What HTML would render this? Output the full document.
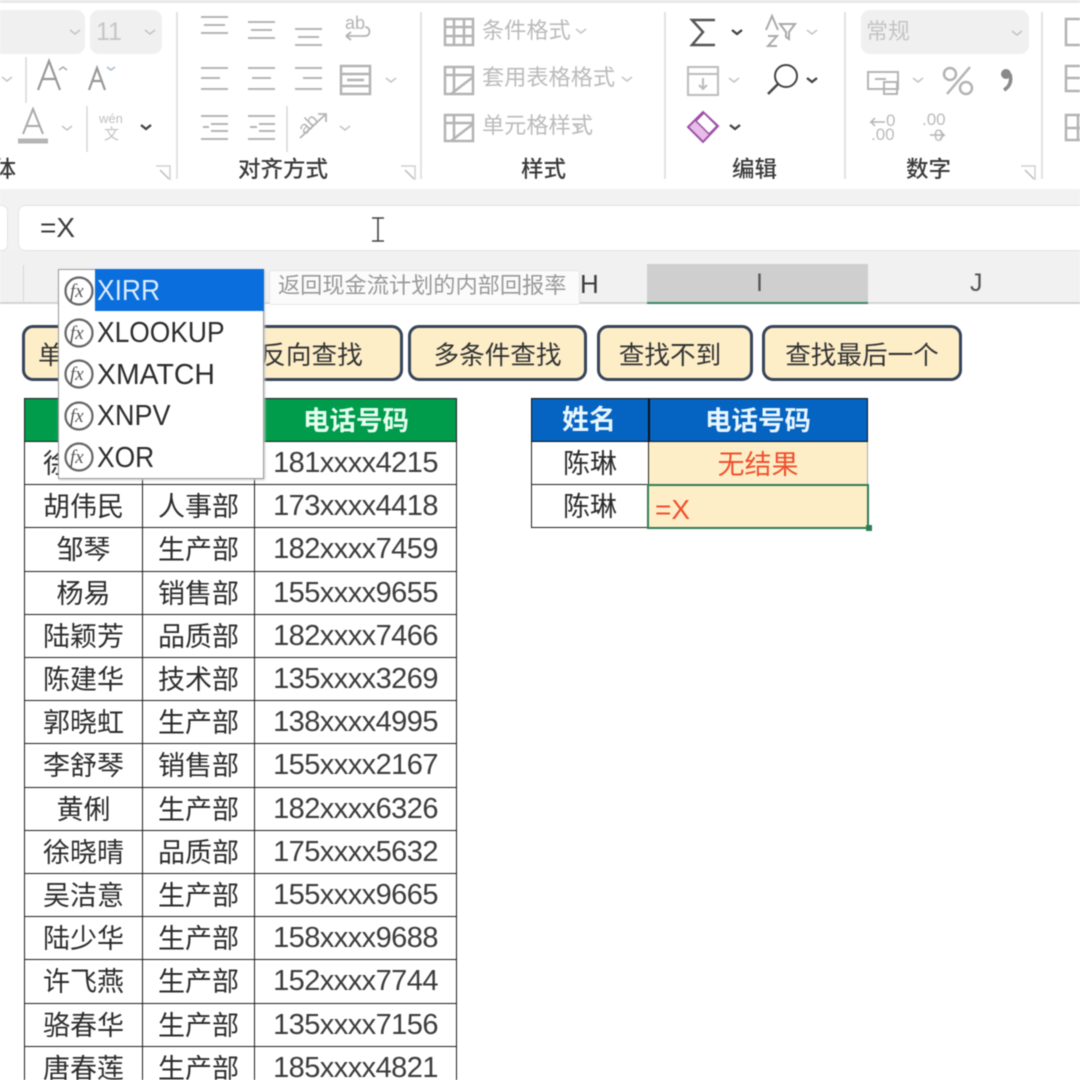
<!DOCTYPE html>
<html><head><meta charset="utf-8"><style>
html,body{margin:0;padding:0;background:#fff}
#p{position:relative;width:1080px;height:1080px;overflow:hidden;background:#fff;font-family:"Liberation Sans","Noto Sans CJK SC",sans-serif;color:#333;filter:blur(.55px)}
#p div{position:absolute;box-sizing:border-box}
.t{white-space:nowrap;line-height:1}
.r{font-size:22.200px;color:#bbb}
.l{font-size:22.500px;color:#3a3a3a;top:159px;font-weight:500}
.c{display:flex;align-items:center;justify-content:center;white-space:nowrap;font-size:27px;color:#2c2c2c;border-right:1.800px solid #1c1c1c;border-bottom:1.800px solid #1c1c1c;height:43.200px;padding-bottom:3px}
.a{left:24px;width:119px;border-left:1.800px solid #1c1c1c}
.b{left:143px;width:112px}
.d{left:255px;width:202px;font-size:29px;color:#3c3c3c;letter-spacing:-.55px;padding-bottom:0;padding-top:1px}
.btn{top:325px;height:56px;background:#fdeec8;border:3px solid #36445a;border-radius:11px;display:flex;align-items:center;justify-content:center;font-size:25.600px;color:#333;white-space:nowrap;padding-top:1px}
.it{left:97px;font-size:29px;color:#2c2c2c;line-height:1;white-space:nowrap;transform:scaleX(.91);transform-origin:left center}
</style></head><body><div id="p">
<div style="left:0;top:0;width:1080px;height:3px;background:#e8e8e8"></div>
<div style="left:0;top:189px;width:1080px;height:16px;background:#f2f2f2"></div>
<div style="left:0;top:205px;width:1080px;height:46px;background:#f2f2f2"></div>
<div style="left:-20px;top:205px;width:28px;height:46px;background:#fff;border-radius:6px;border:1px solid #e4e4e4"></div>
<div style="left:18px;top:205px;width:1080px;height:46px;background:#fff;border-radius:7px;border:1px solid #e4e4e4"></div>
<div class="t" style="left:40px;top:214px;font-size:28px;color:#3c3c3c">=X</div>
<svg style="position:absolute;left:369px;top:216px" width="18" height="27" fill="none" stroke="#444" stroke-width="1.600"><path d="M3 2h12M9 2v23M3 25h12"/></svg>
<div style="left:0;top:251px;width:1080px;height:53px;background:#f1f1f1;border-bottom:2px solid #d4d4d4"></div>
<div style="left:23px;top:265px;width:1px;height:38px;background:#d6d6d6"></div>
<div style="left:647px;top:264px;width:221px;height:40px;background:#cfcfcf;border-bottom:2px solid #3a8a65"></div>
<div class="t" style="left:580px;top:271px;font-size:26px;color:#3c3c3c">H</div>
<div class="t" style="left:756px;top:271px;font-size:25px;color:#555">I</div>
<div class="t" style="left:970px;top:271px;font-size:25px;color:#555">J</div>

<div style="left:0;top:10px;width:85px;height:44px;background:#f0f0f0;border-radius:0 9px 9px 0"></div>
<div style="left:90px;top:10px;width:72px;height:44px;background:#f0f0f0;border-radius:9px"></div>
<div style="left:861px;top:10px;width:168px;height:44px;background:#f0f0f0;border-radius:9px"></div>

<svg style="position:absolute;left:0;top:0" width="1080" height="189" fill="none" stroke="#b4b4b4" stroke-width="2">
<g stroke="#e2e2e2" stroke-width="2"><path d="M177 12v167M421 12v167M665 12v167M845 12v167M1042 12v167"/></g>
<g stroke="#d8d8d8" stroke-width="1.500"><path d="M26 57v46M87 106v46M287 106v46"/></g>
<path d="M201 17h27M204 25h21M201 33h27M248 22h27M251 30h21M248 38h27M295 29h27M298 37h21M295 45h27"/>
<path d="M201 68h27M201 78h19M201 89h27M248 68h27M252 78h19M248 89h27M295 68h27M303 78h19M295 89h27"/>
<path d="M341 66h29v28h-29zM341 74h29M341 86h29M347 80h17" stroke-width="2.500"/>
<path d="M201 116h27M211 124h17M211 131h17M201 139h27M203 127h6M248 116h27M259 124h16M259 131h16M248 139h27M250 127h7"/>
<path d="M300 138l26-24M318 114h8v8" stroke-width="1.800"/>
<path d="M346 36h19c6 0 6-9 0-9M346 36l5-4M346 36l5 4" stroke-width="1.800"/>
<path d="M38 90l11-29 11 29M42 79h14" stroke="#999" stroke-width="2.200"/>
<path d="M89 90l8-22 8 22M92 81h10" stroke="#999" stroke-width="2.200"/>
<path d="M59 70l4-3 4 3" stroke="#aaa" stroke-width="1.500"/><path d="M107 67l4 3 4-3" stroke="#a8bcd6" stroke-width="1.500"/>
<path d="M23 134l10-25 10 25M26 126h14" stroke="#aaa"/>
<path d="M18 141h30" stroke="#b5b5b5" stroke-width="5"/>
<path d="M70 30l5 4 5-4M145 30l5 4 5-4M1012 31l5 4 5-4M2 77l5 4 5-4M62 126l5 4 5-4M386 78l5 4 5-4M340 126l5 4 5-4M576 29l5 4 5-4M622 77l5 4 5-4M574 125l5 4 5-4M807 30l5 4 5-4M729 78l5 4 5-4M913 78l5 4 5-4" stroke="#c4c4c4" stroke-width="1.500"/>
<path d="M141 125l5 4 5-4M732 30l5 4 5-4M807 78l5 4 5-4M730 125l5 4 5-4" stroke="#444" stroke-width="2.400"/>
<path d="M445 19h28v26h-28zM445 27h28M445 36h28M454 19v26M464 19v26" stroke-width="2.500"/>
<path d="M445 67h28v27h-28zM445 75h28M454 67v27M451 94l22-17" stroke-width="2.500"/>
<path d="M445 115h28v26h-28zM445 123h28M454 115v26M451 141l22-17" stroke-width="2.500"/>
<path d="M715 20h-23l11 12-11 13h23" stroke="#555" stroke-width="2.500"/>
<path d="M688 67h30v28h-30zM688 74h30M703 78v11M699 85l4 4 4-4" stroke="#bbb" stroke-width="2"/>
<circle cx="786" cy="76" r="11" stroke="#444" stroke-width="2"/><path d="M778 84l-10 10" stroke="#444" stroke-width="2.500"/>
<path d="M766 30l6-14 6 14M768 36h9l-9 10h9M780 24h15l-6 8v7l-3-2v-5z" stroke="#aaa"/>
<path d="M703 112l15 14-15 16-15-15z" fill="#e6bde6" stroke="#a050a8" stroke-width="2"/><path d="M704 113l13 13-8 8-13-13z" fill="#fff" stroke="#a050a8" stroke-width="1.500"/>
<path d="M868 72h30v17h-30zM875 79h11M884 82h13v12h-13z" stroke-width="2"/>
<circle cx="950" cy="74" r="6" stroke-width="2.500"/><circle cx="966" cy="88" r="6" stroke-width="2.500"/><path d="M970 67l-23 27" stroke-width="2.500"/>
<circle cx="1006" cy="74" r="5" fill="#8a8a8a" stroke="none"/><path d="M1010 74c2 8-1 13-6 16" stroke="#8a8a8a" stroke-width="3.500"/>
<path d="M885 122h-14l4-4M871 122l4 4M930 135h14l-4-4M944 135l-4 4" stroke-width="1.500"/>
<path d="M1066 19h26v26h-26zM1066 66h26v25h-26zM1066 115h26v25h-26zM1066 78h26M1066 128h26M1078 115v25" stroke-width="2.500"/>
<path d="M156 166h14v14M401 166h14v14M1021 166h14v14" stroke="#d2d2d2" stroke-width="1.500"/>
<path d="M160 170l9 9M405 170l9 9M1025 170l9 9" stroke="#bbb" stroke-width="1.500"/>
</svg>
<div class="t" style="left:96px;top:20px;font-size:25px;color:#c6c6c6">11</div>
<div class="t" style="left:866px;top:21px;font-size:22px;color:#c4c4c4">常规</div>
<div class="t" style="left:345px;top:14px;font-size:18px;color:#b4b4b4">ab</div>
<div class="t" style="left:99px;top:112px;font-size:13px;color:#c0c0c0">wén</div>
<div class="t" style="left:104px;top:127px;font-size:15px;color:#c4c4c4">文</div>
<div class="t" style="left:298px;top:115px;font-size:18px;color:#b4b4b4;transform:rotate(-45deg)">ab</div>
<div class="t" style="left:886px;top:112px;font-size:17px;color:#bbb">0</div>
<div class="t" style="left:871px;top:126px;font-size:17px;color:#bbb">.00</div>
<div class="t" style="left:922px;top:111px;font-size:17px;color:#bbb">.00</div>
<div class="t" style="left:934px;top:127px;font-size:17px;color:#bbb">0</div>
<div class="t r" style="left:482px;top:20px">条件格式</div>
<div class="t r" style="left:482px;top:67px">套用表格格式</div>
<div class="t r" style="left:482px;top:115px">单元格样式</div>
<div class="t l" style="left:-29px">字体</div>
<div class="t l" style="left:238px">对齐方式</div>
<div class="t l" style="left:521px">样式</div>
<div class="t l" style="left:732px">编辑</div>
<div class="t l" style="left:906px">数字</div>

<div class="btn" style="left:22px;width:160px">单条件查找</div>
<div class="btn" style="left:220px;width:183px">反向查找</div>
<div class="btn" style="left:408px;width:179px">多条件查找</div>
<div class="btn" style="left:597px;width:156px;padding-right:10px">查找不到</div>
<div class="btn" style="left:762px;width:200px">查找最后一个</div>

<div style="left:24px;top:398px;width:433px;height:44px;background:#009c4c;border:1.800px solid #1c1c1c"></div>
<div class="t" style="left:303px;top:408px;font-size:26.500px;color:#e6fff0;font-weight:700">电话号码</div>
<div class="c a" style="top:442px">徐文雅</div><div class="c b" style="top:442px">人事部</div><div class="c d" style="top:442px">181xxxx4215</div>
<div class="c a" style="top:485.200px">胡伟民</div><div class="c b" style="top:485.200px">人事部</div><div class="c d" style="top:485.200px">173xxxx4418</div>
<div class="c a" style="top:528.400px">邹琴</div><div class="c b" style="top:528.400px">生产部</div><div class="c d" style="top:528.400px">182xxxx7459</div>
<div class="c a" style="top:571.600px">杨易</div><div class="c b" style="top:571.600px">销售部</div><div class="c d" style="top:571.600px">155xxxx9655</div>
<div class="c a" style="top:614.800px">陆颖芳</div><div class="c b" style="top:614.800px">品质部</div><div class="c d" style="top:614.800px">182xxxx7466</div>
<div class="c a" style="top:658px">陈建华</div><div class="c b" style="top:658px">技术部</div><div class="c d" style="top:658px">135xxxx3269</div>
<div class="c a" style="top:701.200px">郭晓虹</div><div class="c b" style="top:701.200px">生产部</div><div class="c d" style="top:701.200px">138xxxx4995</div>
<div class="c a" style="top:744.400px">李舒琴</div><div class="c b" style="top:744.400px">销售部</div><div class="c d" style="top:744.400px">155xxxx2167</div>
<div class="c a" style="top:787.600px">黄俐</div><div class="c b" style="top:787.600px">生产部</div><div class="c d" style="top:787.600px">182xxxx6326</div>
<div class="c a" style="top:830.800px">徐晓晴</div><div class="c b" style="top:830.800px">品质部</div><div class="c d" style="top:830.800px">175xxxx5632</div>
<div class="c a" style="top:874px">吴洁意</div><div class="c b" style="top:874px">生产部</div><div class="c d" style="top:874px">155xxxx9665</div>
<div class="c a" style="top:917.200px">陆少华</div><div class="c b" style="top:917.200px">生产部</div><div class="c d" style="top:917.200px">158xxxx9688</div>
<div class="c a" style="top:960.400px">许飞燕</div><div class="c b" style="top:960.400px">生产部</div><div class="c d" style="top:960.400px">152xxxx7744</div>
<div class="c a" style="top:1003.600px">骆春华</div><div class="c b" style="top:1003.600px">生产部</div><div class="c d" style="top:1003.600px">135xxxx7156</div>
<div class="c a" style="top:1046.800px">唐春莲</div><div class="c b" style="top:1046.800px">生产部</div><div class="c d" style="top:1046.800px">185xxxx4821</div>

<div style="left:531px;top:398px;width:337px;height:44px;background:#0563c1;border:1.800px solid #111"></div>
<div style="left:648px;top:398px;width:1.800px;height:131px;background:#111"></div>
<div class="t" style="left:562px;top:407px;font-size:27px;color:#e8f6ff;font-weight:700">姓名</div>
<div class="t" style="left:705px;top:408px;font-size:26.500px;color:#e8f6ff;font-weight:700">电话号码</div>
<div class="c" style="left:531px;top:442px;width:118px;border-left:1.800px solid #1c1c1c">陈琳</div>
<div class="c" style="left:531px;top:485.200px;width:118px;border-left:1.800px solid #1c1c1c">陈琳</div>
<div class="c" style="left:649px;top:442px;width:219px;background:#fdeec8;color:#f0502d;border-bottom:none;border-right:1px solid #aaa">无结果</div>
<div style="left:647px;top:484px;width:222px;height:45px;background:#fdeec8;border:2.500px solid #2f7d55"></div>
<div style="left:866px;top:525px;width:6px;height:6px;background:#2f7d55"></div>
<div class="t" style="left:655px;top:496px;font-size:28px;color:#f0502d">=X</div>

<div style="left:58px;top:269px;width:206px;height:210px;background:#fff;border:1px solid #999;box-shadow:1px 1px 2px #ccc"></div>
<div style="left:95px;top:269px;width:169px;height:42px;background:#0a6fdc"></div>
<div class="it" style="top:277px;color:#dcecff">XIRR</div>
<div class="it" style="top:319px">XLOOKUP</div>
<div class="it" style="top:361px;transform:scaleX(.98)">XMATCH</div>
<div class="it" style="top:402px;transform:scaleX(.93)">XNPV</div>
<div class="it" style="top:444px">XOR</div>
<svg style="position:absolute;left:62px;top:274px" width="34" height="200" fill="none" stroke="#666" stroke-width="2.200" font-family="Liberation Serif" font-style="italic" font-size="19">
<g><circle cx="17" cy="17" r="13.500"/><circle cx="17" cy="59" r="13.500"/><circle cx="17" cy="100" r="13.500"/><circle cx="17" cy="142" r="13.500"/><circle cx="17" cy="183" r="13.500"/></g>
<g fill="#555" stroke="none"><text x="8" y="23">fx</text><text x="8" y="65">fx</text><text x="8" y="106">fx</text><text x="8" y="148">fx</text><text x="8" y="189">fx</text></g></svg>
<div style="left:269px;top:270px;width:311px;height:35px;background:#fbfbfb;border:1px solid #e6e6e6;border-radius:3px"></div>
<div class="t" style="left:278px;top:275px;font-size:22.200px;color:#999">返回现金流计划的内部回报率</div>
</div></body></html>
